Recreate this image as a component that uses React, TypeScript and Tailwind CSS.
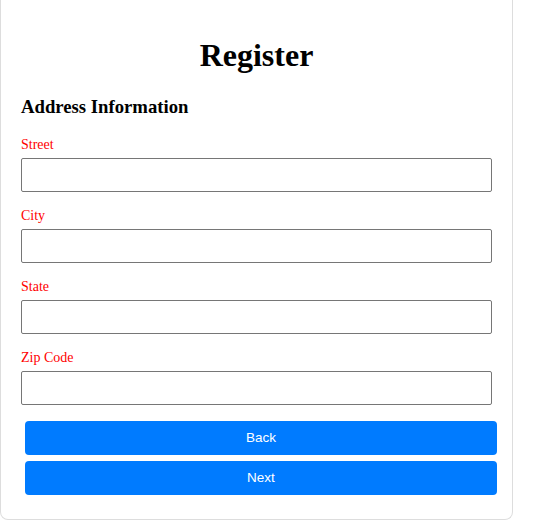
const fields = ["Street", "City", "State", "Zip Code"];

const App = () => {
  return (
    <div className="w-[544px] h-[521px] overflow-hidden bg-white font-['Liberation_Serif',serif]">
      <div className="w-[513px] border-x border-b border-[#dddddd] rounded-b-[8px] bg-white px-[20px] pt-[37px] pb-[24px]">
        <h1 className="text-[32px] leading-[37px] font-bold text-center text-black">Register</h1>
        <h3 className="mt-[22px] mb-[18px] text-[18.72px] leading-[22px] font-bold text-black">
          Address Information
        </h3>
        <form className="flex flex-col gap-[15px]">
          {fields.map((f) => (
            <div key={f} className="flex flex-col">
              <label className="block text-[14px] leading-[18px] text-[#ff0000] mb-[4px]">{f}</label>
              <input
                type="text"
                className="w-[471px] h-[34px] border border-[#767676] rounded-[2px] bg-white outline-none"
              />
            </div>
          ))}
        </form>
        <div className="mt-[16px] ml-[4px] flex flex-col gap-[6px] w-[472px] font-['Liberation_Sans',Arial,sans-serif]">
          <button type="button" className="h-[34px] rounded-[4px] bg-[#007bff] text-white text-[13.5px]">
            Back
          </button>
          <button type="button" className="h-[34px] rounded-[4px] bg-[#007bff] text-white text-[13.5px]">
            Next
          </button>
        </div>
      </div>
    </div>
  );
};

export default App;
